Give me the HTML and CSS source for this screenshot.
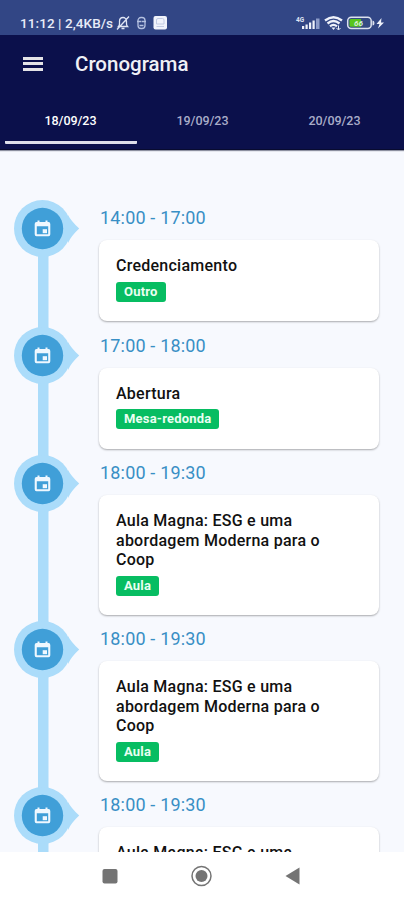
FILE: index.html
```
<!DOCTYPE html>
<html lang="pt-BR">
<head>
<meta charset="utf-8">
<title>Cronograma</title>
<link rel="stylesheet" href="styles.css">
</head>
<body>
<svg width="0" height="0" class="defs">
  <defs>
    <symbol id="event" viewBox="0 0 17 17"><path fill-rule="evenodd" d="M2.500 2H3.500V.5H5.500V2H11.500V.5H13.500V2H14.500Q16.300 2 16.300 4V14.300Q16.300 16.200 14.500 16.200H2.500Q.7 16.200 .7 14.300V4Q.7 2 2.500 2zM2.800 6.200V14.200H14.200V6.200z"/><path d="M8.700 9.200h4.300v4H8.700z"/></symbol>
    <symbol id="marker" viewBox="0 0 66 58"><circle cx="28.500" cy="28.500" r="28.500"/><path d="M54 15Q57 21 65.200 28.500Q57 36 54 43z"/><circle class="marker-core" cx="28.500" cy="28.500" r="20.700"/></symbol>
  </defs>
</svg>
<div class="phone">
  <div class="status">
    <span class="clock">11:12 | 2,4KB/s</span>
    <svg class="notif" width="54" height="16" viewBox="0 0 54 16" fill="none" stroke="#dfe5f5" stroke-width="1.300">
      <path d="M3.500 11.500h9c-1.500-1.500-1-3-1-5C11.500 4 10 2.500 8 2.500S4.500 4 4.500 6.500c0 2 .5 3.500-1 5zM6.500 13.500h3M14 1.500L2 14.500"/>
      <g stroke="#b5c1e0"><rect x="23" y="2.500" width="7" height="11" rx="3"/><path d="M22 6.500h4M26.500 6.500H31M24.500 10.500h4"/></g>
      <rect x="38.500" y="1" width="13.500" height="13.500" rx="2" fill="#f1f3fb" stroke="none"/>
      <path d="M41.500 9V5a1.500 1.500 0 0 1 1.500-1.500h4.500a1.500 1.500 0 0 1 1.500 1.500v4zM41.500 11.500h7.500" stroke="#c2cbe3" stroke-width="1"/>
    </svg>
    <svg class="system" width="90" height="17" viewBox="0 0 90 17">
      <text x="-4" y="6.500" class="net">4G</text>
      <g fill="#eef1fa"><rect x="2" y="11" width="2.200" height="3"/><rect x="5.500" y="9.500" width="2.200" height="4.500"/><rect x="9" y="7.500" width="2.200" height="6.500"/><rect x="12.500" y="5.500" width="2.200" height="8.500"/></g>
      <rect x="16" y="3.500" width="3.500" height="10.500" fill="#8c9bc8"/>
      <g fill="none" stroke="#eef1fa" stroke-width="2.300"><path d="M25 5.500Q33.500-1 42 5.500M27.500 8.500Q33.500 3.600 39.500 8.500M30 11.300Q33.500 8.500 37 11.300"/></g>
      <path d="M31.500 12.500h4l-2 2.500z" fill="#eef1fa"/><path d="M38.500 10.500v4M36.500 13l2 2l2-2" stroke="#eef1fa" fill="none"/>
      <rect x="47.700" y="2.200" width="23.500" height="11.300" rx="3.500" fill="#344a82" stroke="#dce1ee" stroke-width="1.500"/>
      <path d="M51 4h10v7.800H51a1.500 1.500 0 0 1-1.500-1.500v-4.800A1.500 1.500 0 0 1 51 4z" fill="#57c51b"/>
      <text x="54" y="11" class="charge">66</text>
      <path d="M72.500 5.500q2 0 2 2.500t-2 2.500z" fill="#dce1ee"/>
      <path d="M81.500 3L76.500 9h3l-1.500 4.500L84 7.500h-3z" fill="#eef1fa"/>
    </svg>
  </div>
  <header class="appbar">
    <div class="toolbar">
      <div class="menu"><i></i><i></i><i></i></div>
      <h1>Cronograma</h1>
    </div>
    <nav class="tabs">
      <a class="tab active">18/09/23</a>
      <a class="tab">19/09/23</a>
      <a class="tab">20/09/23</a>
    </nav>
  </header>
  <main class="timeline">
    <section class="item">
      <div class="rail"><svg class="marker"><use href="#marker"/></svg><svg class="event"><use href="#event"/></svg></div>
      <div class="entry"><div class="time">14:00 - 17:00</div><article class="card"><h2>Credenciamento</h2><span class="badge">Outro</span></article></div>
    </section>
    <section class="item">
      <div class="rail"><svg class="marker"><use href="#marker"/></svg><svg class="event"><use href="#event"/></svg></div>
      <div class="entry"><div class="time">17:00 - 18:00</div><article class="card"><h2>Abertura</h2><span class="badge">Mesa-redonda</span></article></div>
    </section>
    <section class="item">
      <div class="rail"><svg class="marker"><use href="#marker"/></svg><svg class="event"><use href="#event"/></svg></div>
      <div class="entry"><div class="time">18:00 - 19:30</div><article class="card"><h2>Aula Magna: ESG e uma<br>abordagem Moderna para o<br>Coop</h2><span class="badge">Aula</span></article></div>
    </section>
    <section class="item">
      <div class="rail"><svg class="marker"><use href="#marker"/></svg><svg class="event"><use href="#event"/></svg></div>
      <div class="entry"><div class="time">18:00 - 19:30</div><article class="card"><h2>Aula Magna: ESG e uma<br>abordagem Moderna para o<br>Coop</h2><span class="badge">Aula</span></article></div>
    </section>
    <section class="item">
      <div class="rail"><svg class="marker"><use href="#marker"/></svg><svg class="event"><use href="#event"/></svg></div>
      <div class="entry"><div class="time">18:00 - 19:30</div><article class="card"><h2>Aula Magna: ESG e uma</h2></article></div>
    </section>
  </main>
  <footer class="navbar">
    <svg width="404" height="48" viewBox="0 0 404 48" fill="#747474">
      <rect x="102.500" y="17" width="15" height="14.500" rx="2"/>
      <circle cx="201.500" cy="24" r="9.500" fill="none" stroke="#747474" stroke-width="1.500"/><circle cx="201.500" cy="24" r="6"/>
      <path d="M285.500 24L299.500 15.500V32.500z"/>
    </svg>
  </footer>
</div>
</body>
</html>
```
FILE: styles.css
```
* { box-sizing: border-box; }
body { margin: 0; font-family: Roboto, "Liberation Sans", sans-serif; background: #f7f9fe; }
h1, h2 { margin: 0; }
.defs { display: block; }
.phone { width: 404px; height: 900px; display: flex; flex-direction: column; overflow: hidden; }
.status { flex: none; height: 35px; background: #324685; display: flex; align-items: flex-start; padding: 15px 20px 0; color: #e8ecf8; }
.clock { font-size: 13.500px; line-height: 17px; font-weight: 500; letter-spacing: 0.08px; white-space: nowrap; width: 95px; }
.notif { flex: none; display: block; }
.system { flex: none; display: block; margin-left: auto; margin-right: -6px; overflow: visible; }
.net { font-size: 6.500px; font-weight: 700; fill: #dfe5f5; }
.charge { font-size: 8px; font-style: italic; font-weight: 700; fill: #d9f0d4; }
.appbar { flex: none; height: 115px; background: #0b104b; display: flex; flex-direction: column; border-bottom: 1px solid #080b30; box-shadow: 0 1px 1px #8d90a0; }
.toolbar { display: flex; align-items: center; height: 57px; padding-left: 23px; gap: 32px; }
.menu { width: 20px; display: flex; flex-direction: column; gap: 2.500px; }
.menu i { height: 3px; background: #e4e3e6; }
h1 { font-size: 20.500px; line-height: 24px; font-weight: 500; color: #eff0f6; }
.tabs { flex: 1; display: grid; grid-template-columns: repeat(3, 132px); padding-left: 4.500px; }
.tab { display: flex; justify-content: center; padding-top: 21px; font-size: 12.500px; line-height: 16px; font-weight: 500; letter-spacing: -0.05px; color: #a9acc8; margin-bottom: 5px; border-bottom: 3px solid transparent; }
.tab.active { color: #fff; border-color: #dedfea; border-radius: 1px; }
.timeline { flex: 1; min-height: 0; overflow: hidden; padding: 49.800px 25px 0 14px; }
.item { display: grid; grid-template-columns: 85px 280px; }
.rail { position: relative; background: linear-gradient(#abdcfa, #abdcfa) 23.500px 0 / 10.500px 100% no-repeat; }
.item:first-child .rail { background-position: 23.500px 20px; }
.marker { display: block; width: 66px; height: 58px; fill: #abdcfa; }
.marker-core { fill: #409fd8; }
.event { position: absolute; left: 20px; top: 20px; width: 17px; height: 17px; fill: #eff8ff; }
.time { height: 40.500px; padding-top: 7.500px; padding-left: 1px; font-size: 18px; line-height: 21px; letter-spacing: 0.18px; color: #398fc5; }
.entry { padding-bottom: 6px; }
.card { background: #fff; border-radius: 8px; padding: 16px 17px 19px; min-height: 81px; box-shadow: 0 1px 2px rgba(0, 0, 0, .32); display: flex; flex-direction: column; align-items: flex-start; gap: 6px; }
.card h2 { font-size: 16px; line-height: 19.500px; font-weight: 500; letter-spacing: 0.25px; color: #111; white-space: nowrap; }
.badge { height: 20px; padding: 0 8px; border-radius: 3px; background: #07bd62; color: #eafff2; font-size: 13px; line-height: 20px; font-weight: 700; letter-spacing: 0.2px; }
.navbar { flex: none; height: 48px; background: #fff; }
.navbar svg { display: block; }
```
